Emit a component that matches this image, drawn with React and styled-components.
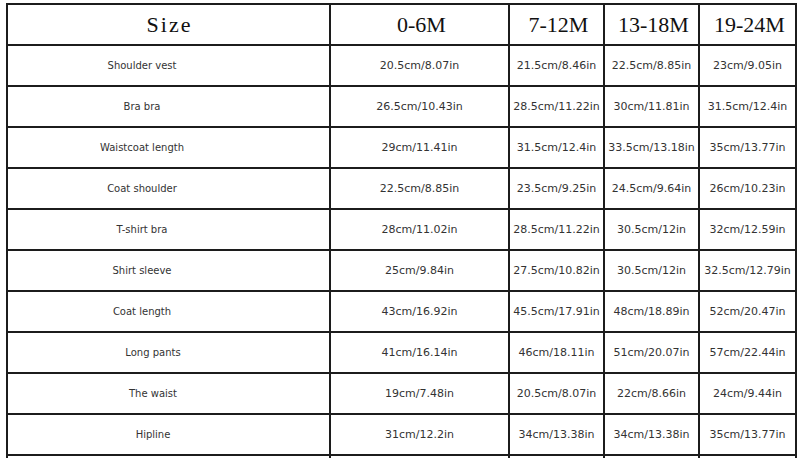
import React from "react";
import styled, { createGlobalStyle } from "styled-components";

const Global = createGlobalStyle`
  html, body { margin: 0; padding: 0; background: #ffffff; }
  body { width: 803px; height: 458px; overflow: hidden; }
`;

const Page = styled.div`
  padding: 3px 0 0 6px;
`;

const Table = styled.div`
  display: grid;
  grid-template-columns: 323px 179px 95px 95px 97px;
  grid-auto-rows: 41px;
  width: max-content;
  border-left: 2px solid #1c1c1c;
  border-top: 2px solid #1c1c1c;
`;

const Cell = styled.div`
  box-sizing: border-box;
  display: flex;
  align-items: center;
  justify-content: center;
  border-right: 2px solid #1c1c1c;
  border-bottom: 2px solid #1c1c1c;
  white-space: nowrap;
`;

const HeadCell = styled(Cell)`
  font-family: "Liberation Serif", "DejaVu Serif", serif;
  font-size: 22px;
  color: #111;
  letter-spacing: ${(p) => (p.$spaced ? "2px" : "0")};
  padding-left: ${(p) => (p.$spaced ? "2px" : "4px")};
  padding-top: 1px;
`;

const LabelCell = styled(Cell)`
  font-family: "DejaVu Sans", "Liberation Sans", sans-serif;
  font-size: 10px;
  color: #333;
  padding-right: ${(p) => (p.$shift ? "31px" : "53px")};
`;

const ValueCell = styled(Cell)`
  font-family: "DejaVu Sans", "Liberation Sans", sans-serif;
  font-size: 11px;
  color: #333;
`;

const headers = ["0-6M", "7-12M", "13-18M", "19-24M"];

const rows = [
  { label: "Shoulder vest", values: ["20.5cm/8.07in", "21.5cm/8.46in", "22.5cm/8.85in", "23cm/9.05in"] },
  { label: "Bra bra", values: ["26.5cm/10.43in", "28.5cm/11.22in", "30cm/11.81in", "31.5cm/12.4in"] },
  { label: "Waistcoat length", values: ["29cm/11.41in", "31.5cm/12.4in", "33.5cm/13.18in", "35cm/13.77in"] },
  { label: "Coat shoulder", values: ["22.5cm/8.85in", "23.5cm/9.25in", "24.5cm/9.64in", "26cm/10.23in"] },
  { label: "T-shirt bra", values: ["28cm/11.02in", "28.5cm/11.22in", "30.5cm/12in", "32cm/12.59in"] },
  { label: "Shirt sleeve", values: ["25cm/9.84in", "27.5cm/10.82in", "30.5cm/12in", "32.5cm/12.79in"] },
  { label: "Coat length", values: ["43cm/16.92in", "45.5cm/17.91in", "48cm/18.89in", "52cm/20.47in"] },
  { label: "Long pants", shift: true, values: ["41cm/16.14in", "46cm/18.11in", "51cm/20.07in", "57cm/22.44in"] },
  { label: "The waist", shift: true, values: ["19cm/7.48in", "20.5cm/8.07in", "22cm/8.66in", "24cm/9.44in"] },
  { label: "Hipline", shift: true, values: ["31cm/12.2in", "34cm/13.38in", "34cm/13.38in", "35cm/13.77in"] },
  { label: "", values: ["", "", "", ""] },
];

export default function App() {
  return (
    <>
      <Global />
      <Page>
        <Table>
          <HeadCell $spaced>Size</HeadCell>
          {headers.map((h) => (
            <HeadCell key={h}>{h}</HeadCell>
          ))}
          {rows.map((r, ri) => (
            <React.Fragment key={ri}>
              <LabelCell $shift={r.shift}>{r.label}</LabelCell>
              {r.values.map((v, i) => (
                <ValueCell key={i}>{v}</ValueCell>
              ))}
            </React.Fragment>
          ))}
        </Table>
      </Page>
    </>
  );
}
